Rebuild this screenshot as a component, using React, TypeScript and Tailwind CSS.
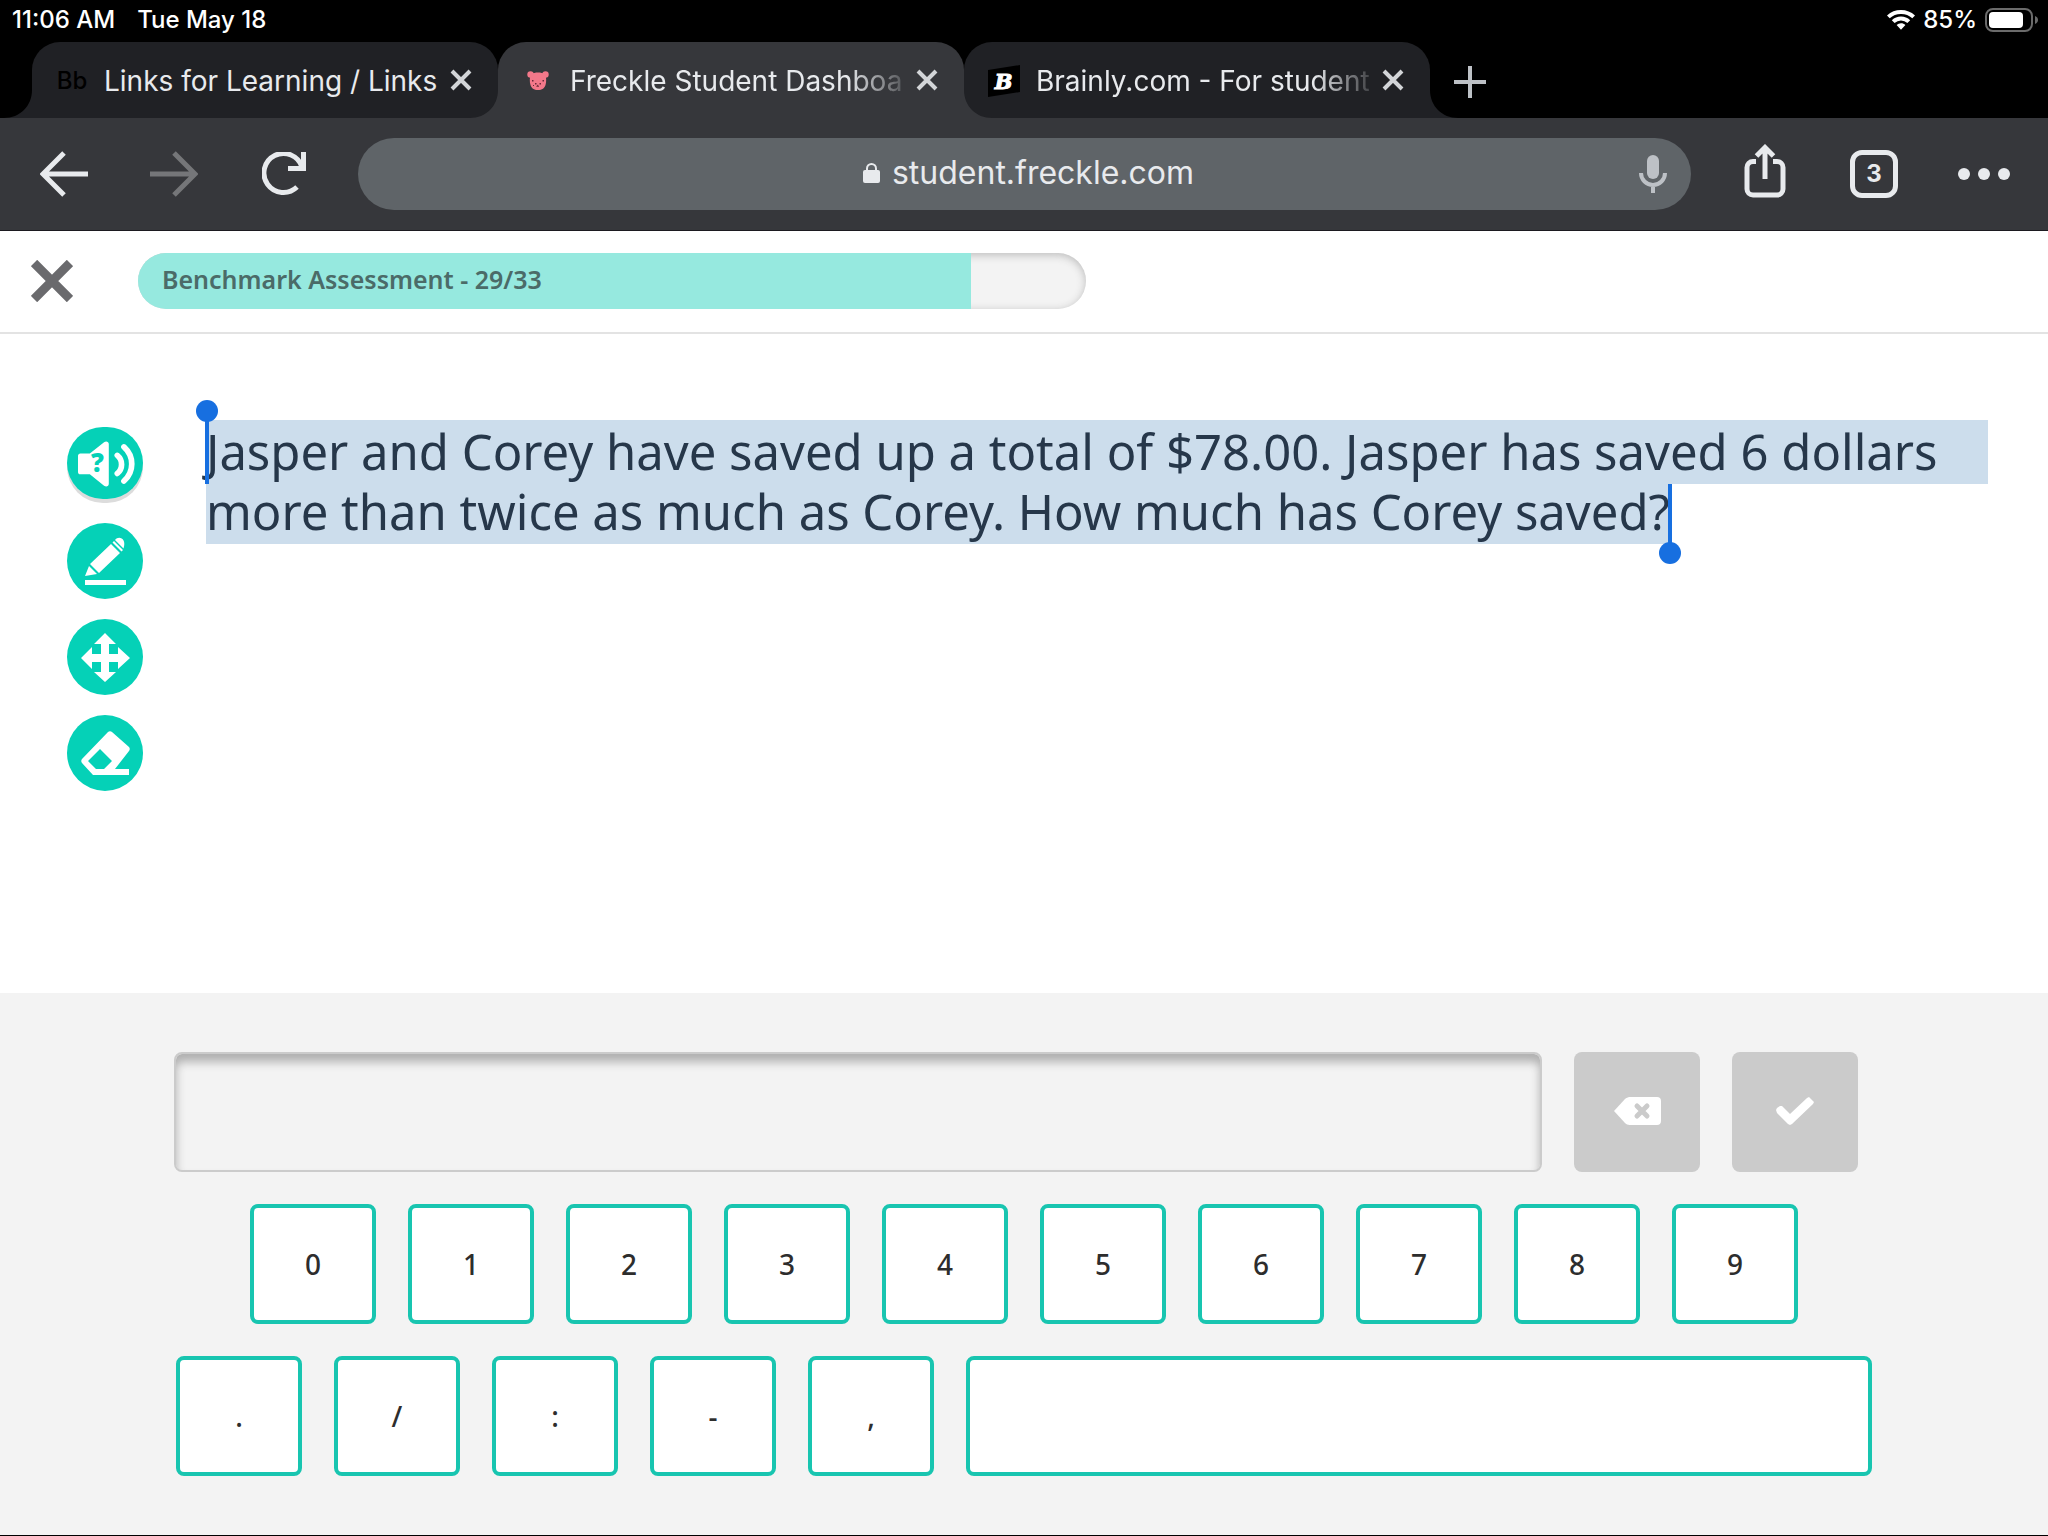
import { useState } from 'react';
import type { ReactNode } from 'react';

const digits = ['0', '1', '2', '3', '4', '5', '6', '7', '8', '9'];
const symbols = ['.', '/', ':', '-', ','];

const current = 29;
const total = 33;

type Tab = { title: string; icon: ReactNode; active?: boolean; faded?: boolean };

const tabs: Tab[] = [
  {
    title: 'Links for Learning / Links',
    icon: <span className="text-2xl font-medium text-black">Bb</span>,
  },
  { title: 'Freckle Student Dashboa', icon: <PigIcon />, active: true, faded: true },
  { title: 'Brainly.com - For student', icon: <BrainlyIcon />, faded: true },
];

function PigIcon() {
  return (
    <svg className="h-5 w-[22px]" viewBox="0 0 22 20">
      <g fill="#f4788a">
        <circle cx="3.500" cy="3.500" r="3.200" />
        <circle cx="18.500" cy="3.500" r="3.200" />
        <path d="M4 3c4-2 10-2 14 0 1.500 3 1.500 8 .5 11-.8 3-3.500 5-7.500 5s-6.700-2-7.500-5C2.500 11 2.500 6 4 3z" />
      </g>
      <path
        fill="#6b2a3a"
        d="M5 9h1.500v1.500H5zM15.500 9H17v1.500h-1.500zM8 12h1.500v1.500H8zM12.500 12H14v1.500h-1.500zM9 15.500l2-2 1 2.500zM6 14h1v1H6z"
      />
    </svg>
  );
}

function BrainlyIcon() {
  return (
    <svg className="h-8 w-8" viewBox="0 0 32 32">
      <path d="M0 5 32 0v27L0 32z" fill="#000" />
      <text
        x="15.500"
        y="24"
        textAnchor="middle"
        fontFamily="DejaVu Serif, serif"
        fontWeight="700"
        fontStyle="italic"
        fontSize="21"
        fill="#fff"
        stroke="#fff"
      >
        B
      </text>
    </svg>
  );
}

function StatusBar() {
  return (
    <div className="flex h-[42px] items-center justify-between pb-0.5 pl-3 pr-2.5 text-2xl font-medium text-white">
      <div className="flex gap-[22px]">
        <span>11:06 AM</span>
        <span>Tue May 18</span>
      </div>
      <div className="flex items-center gap-2">
        <svg className="h-5 w-7" viewBox="0 0 28 20" fill="#fff">
          <path d="M14 0c5.300 0 10.200 2 14 5.400l-2.700 2.800A16.500 16.500 0 0 0 14 3.900 16.500 16.500 0 0 0 2.700 8.200L0 5.400A20.800 20.800 0 0 1 14 0z" />
          <path d="M14 6.600c3.500 0 6.700 1.300 9.200 3.600l-2.800 2.800A9.400 9.400 0 0 0 14 10.500 9.400 9.400 0 0 0 7.600 13l-2.800-2.800A13.500 13.500 0 0 1 14 6.600z" />
          <path d="M14 13.200c1.700 0 3.200.6 4.400 1.700L14 19.700l-4.400-4.800a6.500 6.500 0 0 1 4.400-1.700z" />
        </svg>
        <span>85%</span>
        <svg className="h-6 w-[53px]" viewBox="0 0 53 24">
          <rect x="1" y="1" width="46" height="22" rx="7" fill="none" stroke="#6b6b6b" strokeWidth="2" />
          <rect x="4" y="4" width="34" height="16" rx="4" fill="#fff" />
          <path d="M50 8c2 .8 3 2.200 3 4s-1 3.200-3 4z" fill="#6b6b6b" />
        </svg>
      </div>
    </div>
  );
}

// concave corner that joins the foot of a tab to the toolbar
function Flare({ className }: { className: string }) {
  return (
    <svg className={className} viewBox="0 0 28 28">
      <path d="M28 0v28H0C16 28 28 16 28 0z" fill="currentColor" />
    </svg>
  );
}

function BrowserTab({ title, icon, active, faded }: Tab) {
  const tone = active ? 'z-10 bg-[#36373b] text-[#36373b]' : 'bg-[#202125] text-[#202125]';
  const fade = faded ? '[mask-image:linear-gradient(to_right,black_80%,transparent)]' : '';
  return (
    <div className={`relative flex h-[76px] w-[466px] items-center rounded-t-[28px] px-6 pt-0.5 ${tone}`}>
      <Flare className="absolute bottom-0 -left-7 h-7 w-7" />
      <Flare className="absolute bottom-0 -right-7 h-7 w-7 -scale-x-100" />
      <span className="flex w-8 shrink-0 justify-center">{icon}</span>
      <span className={`ml-4 flex-1 whitespace-nowrap text-[28px] text-[#e8eaed] ${fade}`}>{title}</span>
      <button aria-label={`Close ${title}`} className="mb-0.5 text-[#d3d5d8]">
        <svg className="h-[22px] w-6" viewBox="0 0 24 22" stroke="currentColor" strokeWidth="4">
          <path d="M2 2l18 18M20 2L2 20" />
        </svg>
      </button>
    </div>
  );
}

function Toolbar() {
  return (
    <div className="flex h-[113px] items-center border-b border-[#1c1a20] bg-[#36373b] pl-10 pr-9 text-[#e8eaed]">
      <button aria-label="Back">
        <svg className="h-12 w-12" viewBox="0 0 48 48" fill="none" stroke="currentColor" strokeWidth="5">
          <path d="M48 24H4M24 3L3 24l21 21" />
        </svg>
      </button>
      <button aria-label="Forward" className="ml-[62px] text-[#757679]">
        <svg className="h-12 w-12" viewBox="0 0 48 48" fill="none" stroke="currentColor" strokeWidth="5">
          <path d="M0 24h44M24 3l21 21-21 21" />
        </svg>
      </button>
      <button aria-label="Reload" className="ml-16">
        <svg className="h-11 w-11" viewBox="0 0 44 44">
          <path d="M35 35A19.500 19.500 0 1 1 40 15" fill="none" stroke="currentColor" strokeWidth="5" />
          <path d="M39 0h5v19H26v-5h13z" fill="currentColor" />
        </svg>
      </button>
      <div className="ml-[52px] flex h-[72px] flex-1 items-center rounded-full bg-[#5f6468] pr-6">
        <div className="flex flex-1 items-center justify-center gap-3 pb-0.5 pl-[60px]">
          <svg className="h-5 w-[17px]" viewBox="0 0 17 20">
            <rect y="7" width="17" height="13" rx="2" fill="currentColor" />
            <path d="M4 9V5.500a4.500 4.500 0 0 1 9 0V9" fill="none" stroke="currentColor" strokeWidth="2" />
          </svg>
          <span className="text-[32px]">student.freckle.com</span>
        </div>
        <button aria-label="Voice search" className="text-[#bdc1c6]">
          <svg className="h-[38px] w-7" viewBox="0 0 28 38">
            <rect x="8" width="12" height="24" rx="6" fill="currentColor" />
            <path d="M2 18a12 12 0 0 0 24 0M14 30v8" fill="none" stroke="currentColor" strokeWidth="4" />
          </svg>
        </button>
      </div>
      <button aria-label="Share" className="mb-1.5 ml-[53px]">
        <svg className="h-[54px] w-[42px]" viewBox="0 0 42 54" fill="none" stroke="currentColor" strokeWidth="5">
          <path d="M12 17.500H9a6 6 0 0 0-6 6V45a6 6 0 0 0 6 6h24a6 6 0 0 0 6-6V23.500a6 6 0 0 0-6-6h-4" />
          <path d="M21 35V4M12.500 12L21 3.500l8.500 8.500" />
        </svg>
      </button>
      <button className="ml-16 flex h-12 w-12 items-center justify-center rounded-xl border-[5px] border-current text-2xl font-bold">
        3
      </button>
      <button aria-label="Menu" className="ml-[60px]">
        <svg className="h-3 w-[54px]" viewBox="0 0 54 12" fill="currentColor">
          <circle cx="6" cy="6" r="6" />
          <circle cx="26" cy="6" r="6" />
          <circle cx="46" cy="6" r="6" />
        </svg>
      </button>
    </div>
  );
}

function ToolButton({ label, className, children }: { label: string; className?: string; children: ReactNode }) {
  return (
    <button aria-label={label} className={`block w-[76px] rounded-full bg-[#05d1b7] ${className ?? 'h-[76px]'}`}>
      <svg className="h-full w-full" viewBox="0 0 76 76" fill="#fff">
        {children}
      </svg>
    </button>
  );
}

function Tools() {
  return (
    <div className="flex w-[76px] shrink-0 flex-col gap-5 pt-[7px]">
      <ToolButton label="Read the question aloud" className="mb-1 h-[72px] shadow-[0_4px_0_#dcdcdc]">
        <path d="M12 28h10l15-12c2-1.500 5-.8 5 2v42c0 3-3 3.500-5 2L22 50H12c-1.500 0-2.500-1-2.500-2.500v-17c0-1.500 1-2.500 2.500-2.500z" />
        <text
          x="30"
          y="48"
          textAnchor="middle"
          fontFamily="Open Sans, sans-serif"
          fontWeight="800"
          fontSize="27"
          fill="#05d1b7"
        >
          ?
        </text>
        <path d="M51 30c6 5 6 14 0 19M58 21c11 10 11 26 0 36" fill="none" stroke="#fff" strokeWidth="6" strokeLinecap="round" />
      </ToolButton>
      <ToolButton label="Draw">
        <path d="M18 57h41v5H18zM18 53l4-10 8 8zM23 41l21-20 9 9-21 20zM45.500 19.500l1.500-1.500 9 9-1.500 1.500zM48 17c4-5 12-1 8.500 8.500z" />
      </ToolButton>
      <ToolButton label="Move">
        <path d="M38 14l11 11h-7v10h9v-7l12 11-12 11v-7h-9v10h7L38 63 27 53h7V43h-9v7L14 39l11-11v7h9V25h-7z" />
      </ToolButton>
      <ToolButton label="Erase">
        <path
          fillRule="evenodd"
          d="M41 17c1-1 3-1 4 0l17 15c1 1 1 3 0 4L48 54h14v6H26L15 48c-1-1-1-3 0-4zM33 34L21 46l8 8h8l8-8z"
        />
      </ToolButton>
    </div>
  );
}

function Key({ children, label, className, onClick }: { children?: ReactNode; label?: string; className?: string; onClick: () => void }) {
  return (
    <button
      aria-label={label}
      onClick={onClick}
      className={`h-[120px] rounded-lg border-4 border-[#18c5b0] bg-white text-[28px] font-medium text-[#2d2d2d] ${className ?? 'w-[126px]'}`}
    >
      {children}
    </button>
  );
}

function Keypad() {
  const [answer, setAnswer] = useState('');
  const press = (key: string) => setAnswer(answer + key);

  return (
    <div className="flex min-h-[543px] flex-col gap-8 border-b border-black bg-[#f3f3f3] pt-[59px]">
      <div className="flex gap-8 pl-[174px] pr-[190px]">
        <input
          aria-label="Answer"
          value={answer}
          onChange={(e) => setAnswer(e.target.value)}
          className="h-[120px] min-w-0 flex-1 rounded-lg border-2 border-[#cbcbcb] bg-[#f3f3f3] px-6 text-[28px] shadow-[inset_0_8px_10px_#b0b0b0] outline-none"
        />
        <button
          aria-label="Delete"
          onClick={() => setAnswer(answer.slice(0, -1))}
          className="flex h-[120px] w-[126px] items-center justify-center rounded-lg bg-[#cbcbcb] pb-0.5"
        >
          <svg className="h-7 w-12" viewBox="0 0 48 28">
            <path d="M1 14L12 2c1-1 3-2 4.500-2H44c2.500 0 4 1.500 4 4v20c0 2.500-1.500 4-4 4H16.500c-1.500 0-3.500-1-4.500-2z" fill="#fff" />
            <path d="M24 9l10 10M34 9L24 19" stroke="#cbcbcb" strokeWidth="5" strokeLinecap="round" />
          </svg>
        </button>
        <button aria-label="Submit" className="flex h-[120px] w-[126px] items-center justify-center rounded-lg bg-[#cbcbcb] pb-0.5">
          <svg className="h-7 w-[38px]" viewBox="0 0 38 28">
            <path d="M1 11l3-2h2l8 8L31 1l2-1 5 5-1 2-21 20-2 1-2-1L1 16l-1-3z" fill="#fff" />
          </svg>
        </button>
      </div>
      <div className="flex justify-center gap-8">
        {digits.map((d) => (
          <Key key={d} onClick={() => press(d)}>
            {d}
          </Key>
        ))}
      </div>
      <div className="flex gap-8 px-44">
        {symbols.map((s) => (
          <Key key={s} onClick={() => press(s)}>
            {s}
          </Key>
        ))}
        <Key label="Space" className="flex-1" onClick={() => press(' ')} />
      </div>
    </div>
  );
}

export default function App() {
  return (
    <div className="flex min-h-screen flex-col bg-white font-['Noto_Sans',sans-serif]">
      <div className="bg-black font-['Inter',sans-serif]">
        <StatusBar />
        <div className="flex items-center overflow-hidden pl-8">
          {tabs.map((tab) => (
            <BrowserTab key={tab.title} {...tab} />
          ))}
          <button aria-label="New tab" className="ml-6 pt-1 text-[#bdc1c6]">
            <svg className="h-8 w-8" viewBox="0 0 32 32" stroke="currentColor" strokeWidth="4">
              <path d="M16 0v32M0 16h32" />
            </svg>
          </button>
        </div>
        <Toolbar />
      </div>

      <header className="flex h-[103px] items-center border-b-2 border-[#e3e3e3] pb-0.5 pl-[31px]">
        <button aria-label="Close" className="text-[#6a6a6d]">
          <svg className="h-[42px] w-[42px]" viewBox="0 0 42 42" stroke="currentColor" strokeWidth="9">
            <path d="M3 3l36 36M39 3L3 39" />
          </svg>
        </button>
        <div className="relative ml-[65px] h-14 w-[948px] overflow-hidden rounded-full bg-[#f3f3f3] shadow-[inset_0_2px_8px_#bbbbbb]">
          <div
            className="flex h-full items-center whitespace-nowrap bg-[#96e9df] pb-0.5 pl-6 text-[25px] font-semibold text-[#4b6b68]"
            style={{ width: `${(current / total) * 100}%` }}
          >
            Benchmark Assessment - {current}/{total}
          </div>
        </div>
      </header>

      <main className="flex flex-1 items-start pl-[67px] pr-[60px] pt-[86px]">
        <Tools />
        <p className="ml-[63px] flex-1 text-[49px] leading-[54px] text-[#26374a]">
          <span className="relative block bg-[#ccddec] pb-1.5 pt-1">
            <span className="absolute -top-5 -left-2.5 h-[22px] w-[22px] rounded-full bg-[#176fe0]" />
            <span className="absolute top-0 -left-px h-16 w-1 bg-[#176fe0]" />
            Jasper and Corey have saved up a total of $78.00. Jasper has saved 6 dollars
          </span>
          <span className="relative inline-block bg-[#ccddec] pb-1.5">
            more than twice as much as Corey. How much has Corey saved?
            <span className="absolute top-0 -right-0.5 h-[60px] w-1 bg-[#176fe0]" />
            <span className="absolute -bottom-5 -right-[11px] h-[22px] w-[22px] rounded-full bg-[#176fe0]" />
          </span>
        </p>
      </main>

      <Keypad />
    </div>
  );
}
